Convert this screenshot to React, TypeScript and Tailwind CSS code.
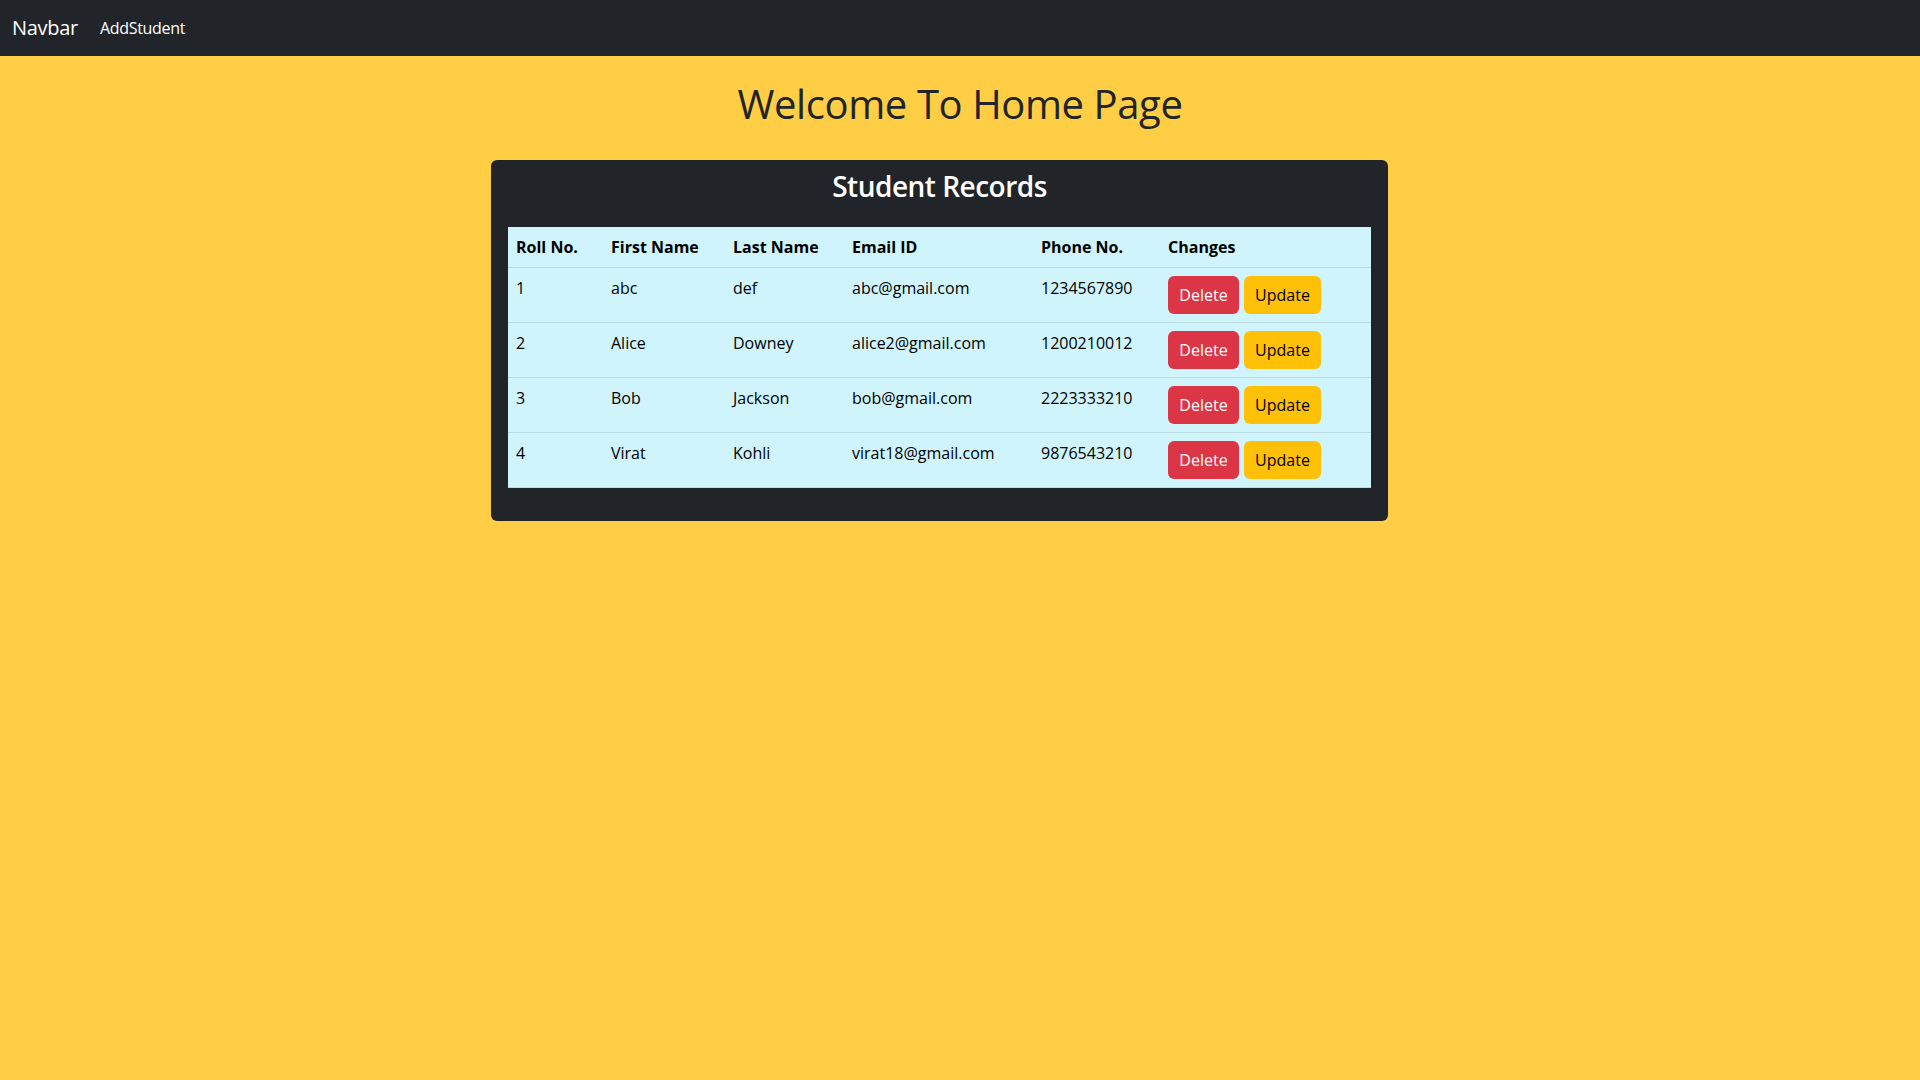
import React from 'react';

const students = [
  { roll: 1, first: 'abc', last: 'def', email: 'abc@gmail.com', phone: '1234567890' },
  { roll: 2, first: 'Alice', last: 'Downey', email: 'alice2@gmail.com', phone: '1200210012' },
  { roll: 3, first: 'Bob', last: 'Jackson', email: 'bob@gmail.com', phone: '2223333210' },
  { roll: 4, first: 'Virat', last: 'Kohli', email: 'virat18@gmail.com', phone: '9876543210' },
];

const font = { fontFamily: '"Open Sans", "Noto Sans", sans-serif' };

export default function App() {
  return (
    <div className="min-h-screen bg-[#ffce44]" style={font}>
      {/* Navbar */}
      <nav className="h-[56px] bg-[#212529] flex items-center px-3">
        <a className="text-[20px] leading-[30px] text-white mr-[14px] tracking-[-0.3px]">Navbar</a>
        <a className="px-2 text-[16px] leading-6 text-white tracking-[-0.3px]">AddStudent</a>
      </nav>

      <h1 className="mt-6 text-center text-[40px] leading-[48px] font-medium text-[#212529] tracking-[-0.4px]">
        Welcome To Home Page
      </h1>

      {/* Records card */}
      <div className="w-[938px] mx-auto mt-8">
        <div className="w-[897px] bg-[#212529] rounded-[6px] pt-[9px] px-[17px] pb-[33px]">
          <h3 className="text-center text-white text-[28px] leading-[34px] font-semibold mb-6 tracking-[-0.5px]">
            Student Records
          </h3>
          <table className="w-full border-collapse bg-[#cff4fc] text-black text-[16px] leading-6 table-fixed">
            <thead>
              <tr className="border-b border-[#badce3]">
                <th className="w-[95px] p-2 text-left font-bold">Roll No.</th>
                <th className="w-[122px] p-2 text-left font-bold">First Name</th>
                <th className="w-[119px] p-2 text-left font-bold">Last Name</th>
                <th className="w-[189px] p-2 text-left font-bold">Email ID</th>
                <th className="w-[127px] p-2 text-left font-bold">Phone No.</th>
                <th className="p-2 text-left font-bold">Changes</th>
              </tr>
            </thead>
            <tbody>
              {students.map((s) => (
                <tr key={s.roll} className="border-b border-[#badce3] align-top">
                  <td className="p-2">{s.roll}</td>
                  <td className="p-2">{s.first}</td>
                  <td className="p-2">{s.last}</td>
                  <td className="p-2">{s.email}</td>
                  <td className="p-2">{s.phone}</td>
                  <td className="p-2">
                    <div className="flex gap-[5px]">
                      <button className="w-[71px] h-[38px] rounded-[6px] bg-[#dc3545] text-white text-[16px]">
                        Delete
                      </button>
                      <button className="w-[77px] h-[38px] rounded-[6px] bg-[#ffc107] text-black text-[16px]">
                        Update
                      </button>
                    </div>
                  </td>
                </tr>
              ))}
            </tbody>
          </table>
        </div>
      </div>
    </div>
  );
}
